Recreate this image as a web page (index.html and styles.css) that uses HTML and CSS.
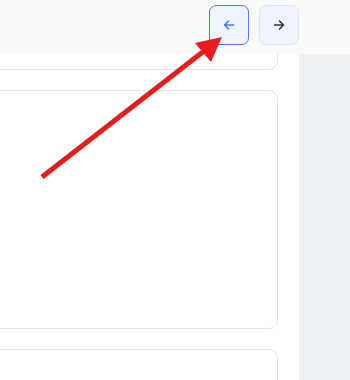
FILE: index.html
```html
<!DOCTYPE html>
<html lang="en">
<head>
    <meta charset="UTF-8">
    <meta name="viewport" content="width=device-width, initial-scale=1.0">
    <title>Pager</title>
    <link rel="stylesheet" href="styles.css">
</head>
<body>
    <!-- Top bar with pager buttons -->
    <div class="topbar">
        <button class="nav-btn active" aria-label="Previous">
            <svg width="16" height="16" viewBox="0 0 16 16" fill="none" stroke="currentColor" stroke-width="1.5" stroke-linecap="round" stroke-linejoin="round">
                <path d="M12.5 8H3.5M7.5 4L3.5 8L7.5 12"/>
            </svg>
        </button>
        <button class="nav-btn" aria-label="Next">
            <svg width="16" height="16" viewBox="0 0 16 16" fill="none" stroke="currentColor" stroke-width="1.5" stroke-linecap="round" stroke-linejoin="round">
                <path d="M3.5 8H12.5M8.5 4L12.5 8L8.5 12"/>
            </svg>
        </button>
    </div>

    <!-- Main area -->
    <div class="layout">
        <div class="content">
            <div class="card card-top"></div>
            <div class="card card-tall"></div>
            <div class="card"></div>
        </div>
        <div class="side-panel"></div>
    </div>

    <!-- Annotation arrow -->
    <svg class="annotation" width="350" height="380" viewBox="0 0 350 380">
        <line x1="42" y1="177" x2="204" y2="51" stroke="#e41e1e" stroke-width="5"/>
        <polygon points="222,37 195,43 211,62" fill="#e41e1e"/>
    </svg>
</body>
</html>
```

FILE: styles.css
```css
/* Reset styles */
* {
    margin: 0;
    padding: 0;
    box-sizing: border-box;
}

body {
    font-family: 'Inter', sans-serif;
    background-color: #fff;
    width: 350px;
    height: 380px;
    overflow: hidden;
    position: relative;
}

/* Top bar */
.topbar {
    height: 54px;
    background-color: #fafafa;
    display: flex;
    justify-content: flex-end;
    align-items: flex-start;
    gap: 10px;
    padding: 5px 51px 0 0;
}

.nav-btn {
    width: 40px;
    height: 40px;
    border-radius: 7px;
    border: 1px solid #dfe3ef;
    background-color: #f0f4ff;
    color: #333;
    display: flex;
    align-items: center;
    justify-content: center;
}

.nav-btn.active {
    border-color: #4f78f2;
    color: #4573f5;
}

/* Layout */
.layout {
    display: flex;
    height: 326px;
}

.content {
    flex: 1;
    overflow: hidden;
    padding-right: 21px;
    display: flex;
    flex-direction: column;
    gap: 20px;
}

.card {
    flex-shrink: 0;
    margin-left: -20px;
    height: 240px;
    border: 1px solid #e2e0ec;
    border-radius: 9px;
    background-color: #fff;
}

.card-top {
    margin-top: -24px;
    height: 40px;
}

.card-tall {
    height: 239px;
}

.side-panel {
    width: 51px;
    background-color: #eef1f3;
}

/* Annotation overlay */
.annotation {
    position: absolute;
    top: 0;
    left: 0;
    pointer-events: none;
}
```
